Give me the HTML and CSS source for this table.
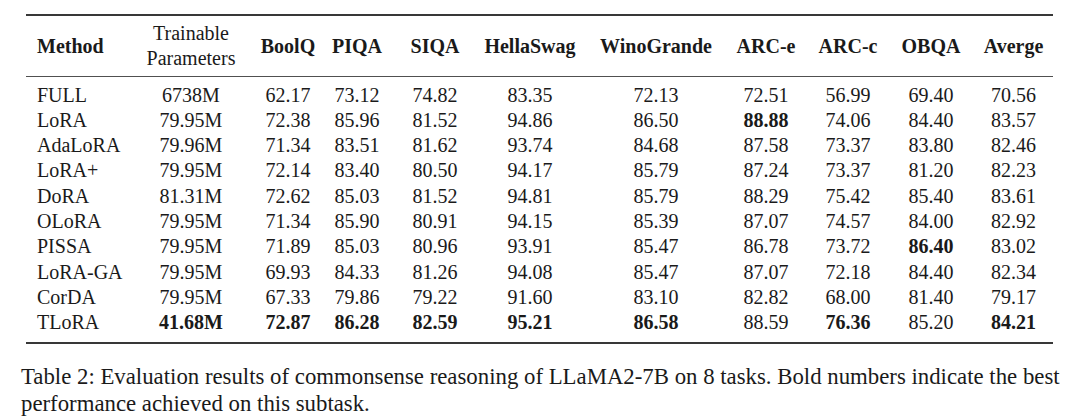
FILE: index.html
```html
<!DOCTYPE html>
<html lang="en">
<head>
<meta charset="utf-8">
<title>Table 2</title>
<link rel="stylesheet" href="styles.css">
</head>
<body>
<table class="results">
  <colgroup>
    <col class="c-method"><col class="c-params"><col class="c-boolq"><col class="c-piqa"><col class="c-siqa"><col class="c-hella"><col class="c-wino"><col class="c-arce"><col class="c-arcc"><col class="c-obqa"><col class="c-avg">
  </colgroup>
  <thead>
    <tr>
      <th class="name">Method</th>
      <th class="plain">Trainable<br>Parameters</th>
      <th>BoolQ</th>
      <th>PIQA</th>
      <th>SIQA</th>
      <th>HellaSwag</th>
      <th>WinoGrande</th>
      <th>ARC-e</th>
      <th>ARC-c</th>
      <th>OBQA</th>
      <th class="avg">Averge</th>
    </tr>
  </thead>
  <tbody>
    <tr class="first"><td class="name">FULL</td><td>6738M</td><td>62.17</td><td>73.12</td><td>74.82</td><td>83.35</td><td>72.13</td><td>72.51</td><td>56.99</td><td>69.40</td><td class="avg">70.56</td></tr>
    <tr><td class="name">LoRA</td><td>79.95M</td><td>72.38</td><td>85.96</td><td>81.52</td><td>94.86</td><td>86.50</td><td class="best">88.88</td><td>74.06</td><td>84.40</td><td class="avg">83.57</td></tr>
    <tr><td class="name">AdaLoRA</td><td>79.96M</td><td>71.34</td><td>83.51</td><td>81.62</td><td>93.74</td><td>84.68</td><td>87.58</td><td>73.37</td><td>83.80</td><td class="avg">82.46</td></tr>
    <tr><td class="name">LoRA+</td><td>79.95M</td><td>72.14</td><td>83.40</td><td>80.50</td><td>94.17</td><td>85.79</td><td>87.24</td><td>73.37</td><td>81.20</td><td class="avg">82.23</td></tr>
    <tr><td class="name">DoRA</td><td>81.31M</td><td>72.62</td><td>85.03</td><td>81.52</td><td>94.81</td><td>85.79</td><td>88.29</td><td>75.42</td><td>85.40</td><td class="avg">83.61</td></tr>
    <tr><td class="name">OLoRA</td><td>79.95M</td><td>71.34</td><td>85.90</td><td>80.91</td><td>94.15</td><td>85.39</td><td>87.07</td><td>74.57</td><td>84.00</td><td class="avg">82.92</td></tr>
    <tr><td class="name">PISSA</td><td>79.95M</td><td>71.89</td><td>85.03</td><td>80.96</td><td>93.91</td><td>85.47</td><td>86.78</td><td>73.72</td><td class="best">86.40</td><td class="avg">83.02</td></tr>
    <tr><td class="name">LoRA-GA</td><td>79.95M</td><td>69.93</td><td>84.33</td><td>81.26</td><td>94.08</td><td>85.47</td><td>87.07</td><td>72.18</td><td>84.40</td><td class="avg">82.34</td></tr>
    <tr><td class="name">CorDA</td><td>79.95M</td><td>67.33</td><td>79.86</td><td>79.22</td><td>91.60</td><td>83.10</td><td>82.82</td><td>68.00</td><td>81.40</td><td class="avg">79.17</td></tr>
    <tr class="last"><td class="name">TLoRA</td><td class="best">41.68M</td><td class="best">72.87</td><td class="best">86.28</td><td class="best">82.59</td><td class="best">95.21</td><td class="best">86.58</td><td>88.59</td><td class="best">76.36</td><td>85.20</td><td class="avg best">84.21</td></tr>
  </tbody>
</table>
<p class="caption">Table 2: Evaluation results of commonsense reasoning of LLaMA2-7B on 8 tasks. Bold numbers indicate the best<br>performance achieved on this subtask.</p>
</body>
</html>
```

FILE: styles.css
```css
html, body {
  margin: 0;
  padding: 0;
  background: #ffffff;
}

body {
  font-family: "Liberation Serif", "Times New Roman", serif;
  color: #1a1a1a;
}

.results {
  margin: 14px 0 0 26px;
  width: 1027px;
  table-layout: fixed;
  border-collapse: collapse;
  font-size: 20px;
}

.c-method { width: 104px; }
.c-params { width: 122px; }
.c-boolq  { width: 72px; }
.c-piqa   { width: 66px; }
.c-siqa   { width: 90px; }
.c-hella  { width: 100px; }
.c-wino   { width: 152px; }
.c-arce   { width: 68px; }
.c-arcc   { width: 96px; }
.c-obqa   { width: 70px; }
.c-avg    { width: 87px; }

.results th,
.results td {
  padding: 0;
  text-align: center;
  white-space: nowrap;
}

.results thead tr {
  border-top: 2px solid #383838;
  border-bottom: 1px solid #505050;
}

.results th {
  font-weight: bold;
  line-height: 25px;
  padding-top: 5px;
  padding-bottom: 5px;
  vertical-align: middle;
}

.results th.plain {
  font-weight: normal;
}

.results td {
  line-height: 25.3px;
}

.results .name {
  text-align: left;
  padding-left: 11px;
}

.results .avg {
  padding-left: 8px;
}

.results .best {
  font-weight: bold;
}

.results tr.first td {
  padding-top: 5.5px;
}

.results tr.last td {
  padding-bottom: 6.5px;
}

.results tbody tr.last {
  border-bottom: 2px solid #383838;
}

.caption {
  margin: 19px 0 0 21px;
  font-size: 22.8px;
  line-height: 27px;
  white-space: nowrap;
}
```
